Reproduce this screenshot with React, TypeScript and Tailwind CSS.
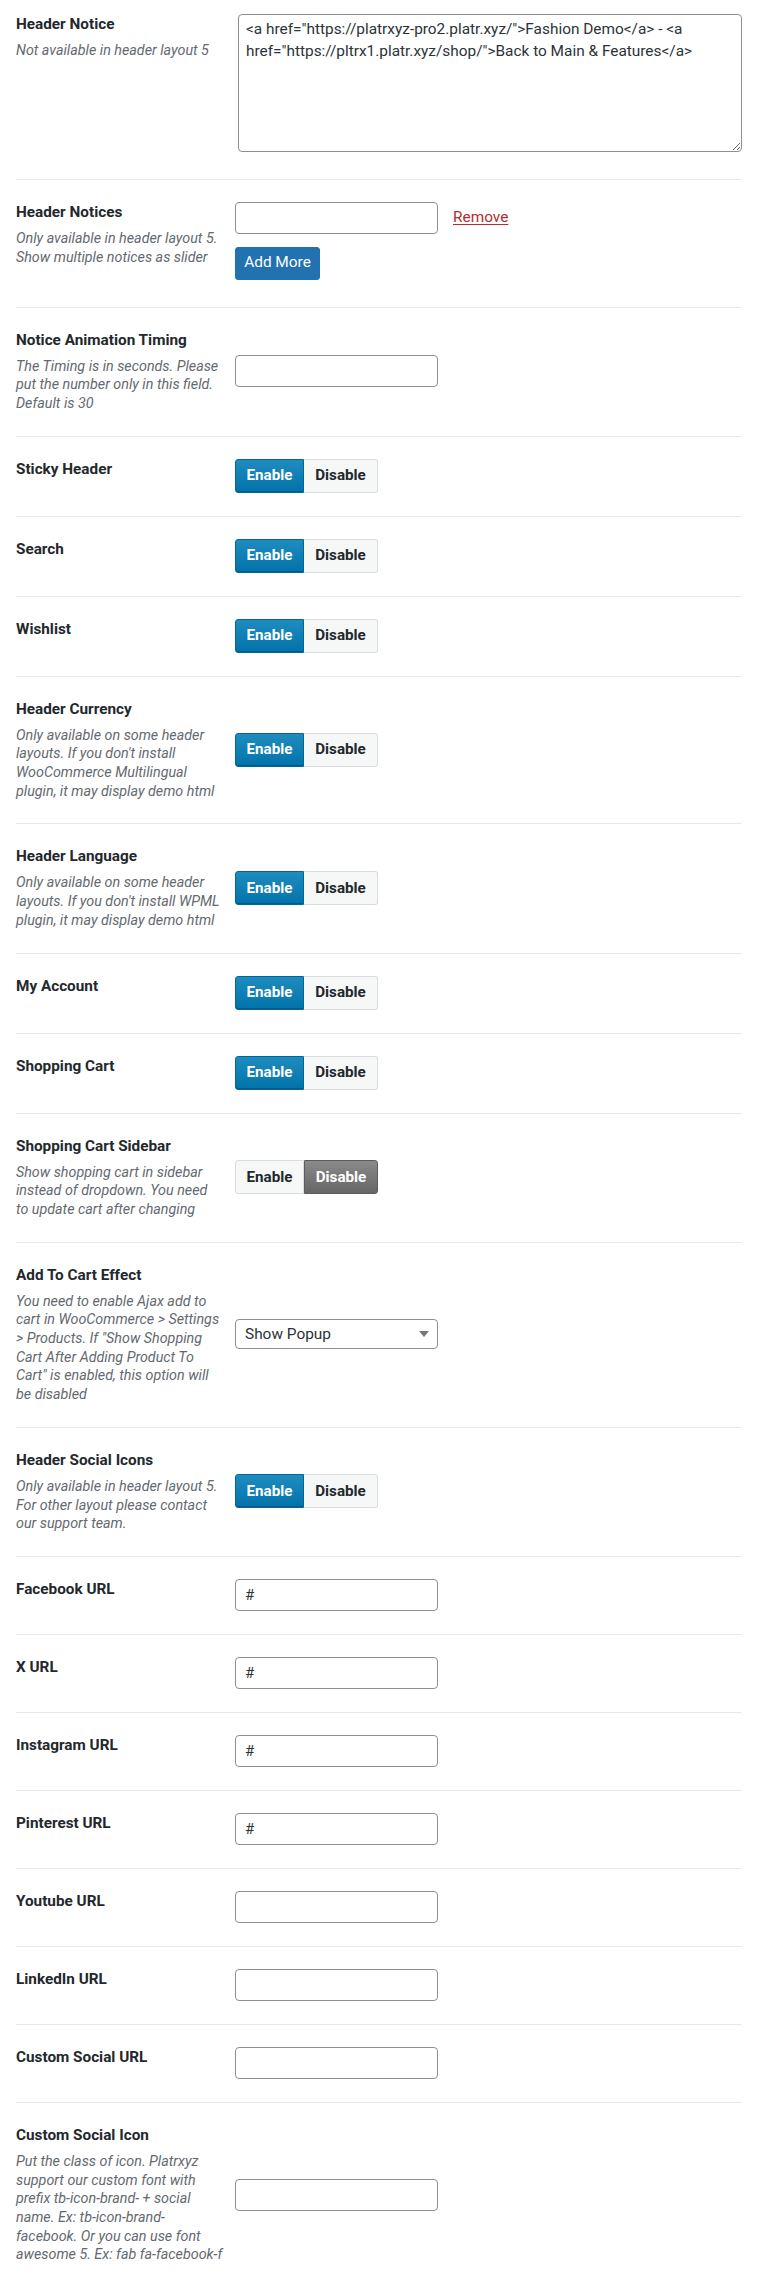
import React from "react";

type Ctl =
  | { kind: "textarea" }
  | { kind: "notices" }
  | { kind: "input"; value?: string }
  | { kind: "toggle"; on: boolean }
  | { kind: "select"; value: string };

type Row = { label: string; desc?: string[]; ctl: Ctl };

const rows: Row[] = [
  { label: "Header Notice", desc: ["Not available in header layout 5"], ctl: { kind: "textarea" } },
  {
    label: "Header Notices",
    desc: ["Only available in header layout 5.", "Show multiple notices as slider"],
    ctl: { kind: "notices" },
  },
  {
    label: "Notice Animation Timing",
    desc: ["The Timing is in seconds. Please", "put the number only in this field.", "Default is 30"],
    ctl: { kind: "input" },
  },
  { label: "Sticky Header", ctl: { kind: "toggle", on: true } },
  { label: "Search", ctl: { kind: "toggle", on: true } },
  { label: "Wishlist", ctl: { kind: "toggle", on: true } },
  {
    label: "Header Currency",
    desc: [
      "Only available on some header",
      "layouts. If you don't install",
      "WooCommerce Multilingual",
      "plugin, it may display demo html",
    ],
    ctl: { kind: "toggle", on: true },
  },
  {
    label: "Header Language",
    desc: ["Only available on some header", "layouts. If you don't install WPML", "plugin, it may display demo html"],
    ctl: { kind: "toggle", on: true },
  },
  { label: "My Account", ctl: { kind: "toggle", on: true } },
  { label: "Shopping Cart", ctl: { kind: "toggle", on: true } },
  {
    label: "Shopping Cart Sidebar",
    desc: ["Show shopping cart in sidebar", "instead of dropdown. You need", "to update cart after changing"],
    ctl: { kind: "toggle", on: false },
  },
  {
    label: "Add To Cart Effect",
    desc: [
      "You need to enable Ajax add to",
      "cart in WooCommerce > Settings",
      "> Products. If \"Show Shopping",
      "Cart After Adding Product To",
      "Cart\" is enabled, this option will",
      "be disabled",
    ],
    ctl: { kind: "select", value: "Show Popup" },
  },
  {
    label: "Header Social Icons",
    desc: ["Only available in header layout 5.", "For other layout please contact", "our support team."],
    ctl: { kind: "toggle", on: true },
  },
  { label: "Facebook URL", ctl: { kind: "input", value: "#" } },
  { label: "X URL", ctl: { kind: "input", value: "#" } },
  { label: "Instagram URL", ctl: { kind: "input", value: "#" } },
  { label: "Pinterest URL", ctl: { kind: "input", value: "#" } },
  { label: "Youtube URL", ctl: { kind: "input" } },
  { label: "LinkedIn URL", ctl: { kind: "input" } },
  { label: "Custom Social URL", ctl: { kind: "input" } },
  {
    label: "Custom Social Icon",
    desc: [
      "Put the class of icon. Platrxyz",
      "support our custom font with",
      "prefix tb-icon-brand- + social",
      "name. Ex: tb-icon-brand-",
      "facebook. Or you can use font",
      "awesome 5. Ex: fab fa-facebook-f",
    ],
    ctl: { kind: "input" },
  },
];

function TextInput({ value }: { value?: string }) {
  return (
    <input
      readOnly
      defaultValue={value ?? ""}
      className="block h-[32px] w-[203px] rounded-[4px] border border-[#8c8f94] bg-white px-[9px] text-[15px] text-[#2c3338] outline-none"
    />
  );
}

function Toggle({ on }: { on: boolean }) {
  return (
    <div className="flex h-[34px] w-[143px] text-[15.2px] font-bold">
      {on ? (
        <div className="flex w-[69px] items-center justify-center rounded-l-[3px] border border-[#006799] bg-linear-to-b from-[#1e8cbe] to-[#0073aa] text-white shadow-[inset_0_-1px_0_#005a85]">
          Enable
        </div>
      ) : (
        <div className="flex w-[69px] items-center justify-center rounded-l-[3px] border border-[#dcdcde] bg-[#f6f7f7] text-[#23282d]">
          Enable
        </div>
      )}
      {on ? (
        <div className="flex flex-1 items-center justify-center rounded-r-[3px] border border-l-0 border-[#dcdcde] bg-[#f6f7f7] text-[#23282d]">
          Disable
        </div>
      ) : (
        <div className="flex flex-1 items-center justify-center rounded-r-[3px] border border-[#5c5c5c] bg-linear-to-b from-[#8a8a8a] to-[#666666] text-white">
          Disable
        </div>
      )}
    </div>
  );
}

function Control({ ctl }: { ctl: Ctl }) {
  switch (ctl.kind) {
    case "textarea":
      return (
        <textarea
          readOnly
          defaultValue={
            '<a href="https://platrxyz-pro2.platr.xyz/">Fashion Demo</a> - <a href="https://pltrx1.platr.xyz/shop/">Back to Main & Features</a>'
          }
          className="ml-[3px] block h-[138px] w-[504px] rounded-[4px] border border-[#8c8f94] bg-white px-[7px] pt-[3px] text-[15.4px] leading-[22.4px] text-[#2c3338] outline-none"
        />
      );
    case "notices":
      return (
        <div className="flex flex-col items-start gap-[12.5px]">
          <div className="flex items-center">
            <TextInput />
            <span className="ml-[15px] text-[15.4px] text-[#b32d2e] underline decoration-1 underline-offset-2">Remove</span>
          </div>
          <div className="flex h-[33px] w-[85px] items-center justify-center rounded-[3px] border border-[#2271b1] bg-[#2271b1] text-[15.4px] text-white">
            Add More
          </div>
        </div>
      );
    case "input":
      return <TextInput value={ctl.value} />;
    case "toggle":
      return <Toggle on={ctl.on} />;
    case "select":
      return (
        <div className="flex h-[30px] w-[203px] items-center justify-between rounded-[4px] border border-[#8c8f94] bg-white pl-[9px] pr-[8px] text-[15.4px] text-[#2c3338]">
          <span>{ctl.value}</span>
          <svg width="10" height="6" viewBox="0 0 10 6">
            <polygon points="0,0 10,0 5,6" fill="#777" />
          </svg>
        </div>
      );
  }
}

export default function App() {
  return (
    <div className="min-h-screen bg-white font-[Roboto,sans-serif] text-[#23282d]">
      <div className="pl-[16px] pr-[23px]">
        {rows.map((r, i) => {
          const first = i === 0;
          const center = !!r.desc && r.ctl.kind !== "textarea" && r.ctl.kind !== "notices";
          const pad = first ? "pt-[14px] pb-[27px]" : r.ctl.kind === "notices" ? "pt-[22px] pb-[27px]" : "pt-[22px] pb-[23px]";
          return (
            <div
              key={r.label}
              className={`flex border-b border-[#e8e8e8] ${pad} ${center ? "items-center" : "items-start"}`}
            >
              <div className="w-[219px] shrink-0 pr-[4px]">
                <div className="text-[15.3px] font-bold leading-[20px] text-[#23282d]">{r.label}</div>
                {r.desc && (
                  <div className="mt-[7px] text-[14.3px] italic leading-[18.7px] text-[#646970]">
                    {r.desc.map((d, j) => (
                      <div key={j} className="whitespace-nowrap">
                        {d}
                      </div>
                    ))}
                  </div>
                )}
              </div>
              <Control ctl={r.ctl} />
            </div>
          );
        })}
      </div>
    </div>
  );
}
